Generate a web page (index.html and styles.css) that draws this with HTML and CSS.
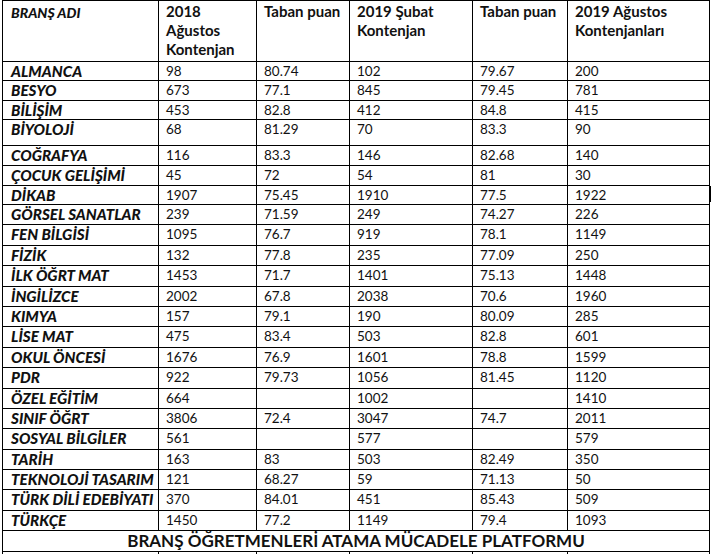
FILE: index.html
```html
<!DOCTYPE html>
<html lang="tr">
<head>
<meta charset="utf-8">
<title>Branş Kontenjanları</title>
<link rel="stylesheet" href="styles.css">
</head>
<body>
<div class="page">
<table class="quota">
  <colgroup>
    <col class="c-name"><col class="c-a"><col class="c-b"><col class="c-c"><col class="c-d"><col class="c-e">
  </colgroup>
  <thead>
    <tr class="head">
      <th class="name">BRANŞ ADI</th>
      <th>2018<br>Ağustos<br>Kontenjan</th>
      <th>Taban puan</th>
      <th>2019 Şubat<br>Kontenjan</th>
      <th>Taban puan</th>
      <th>2019 Ağustos<br>Kontenjanları</th>
    </tr>
  </thead>
  <tbody>
    <tr class="r19"><th class="name">ALMANCA</th><td>98</td><td>80.74</td><td>102</td><td>79.67</td><td>200</td></tr>
    <tr class="r20"><th class="name">BESYO</th><td>673</td><td>77.1</td><td>845</td><td>79.45</td><td>781</td></tr>
    <tr class="r19"><th class="name">BİLİŞİM</th><td>453</td><td>82.8</td><td>412</td><td>84.8</td><td>415</td></tr>
    <tr class="r26"><th class="name">BİYOLOJİ</th><td>68</td><td>81.29</td><td>70</td><td>83.3</td><td>90</td></tr>
    <tr class="r20"><th class="name">COĞRAFYA</th><td>116</td><td>83.3</td><td>146</td><td>82.68</td><td>140</td></tr>
    <tr class="r20"><th class="name">ÇOCUK GELİŞİMİ</th><td>45</td><td>72</td><td>54</td><td>81</td><td>30</td></tr>
    <tr class="r19"><th class="name">DİKAB</th><td>1907</td><td>75.45</td><td>1910</td><td>77.5</td><td>1922</td></tr>
    <tr class="rx"><th class="name">GÖRSEL SANATLAR</th><td>239</td><td>71.59</td><td>249</td><td>74.27</td><td>226</td></tr>
    <tr class="rx"><th class="name">FEN BİLGİSİ</th><td>1095</td><td>76.7</td><td>919</td><td>78.1</td><td>1149</td></tr>
    <tr class="rx"><th class="name">FİZİK</th><td>132</td><td>77.8</td><td>235</td><td>77.09</td><td>250</td></tr>
    <tr class="rx"><th class="name">İLK ÖĞRT MAT</th><td>1453</td><td>71.7</td><td>1401</td><td>75.13</td><td>1448</td></tr>
    <tr class="rx"><th class="name">İNGİLİZCE</th><td>2002</td><td>67.8</td><td>2038</td><td>70.6</td><td>1960</td></tr>
    <tr class="rx"><th class="name">KIMYA</th><td>157</td><td>79.1</td><td>190</td><td>80.09</td><td>285</td></tr>
    <tr class="rx"><th class="name">LİSE MAT</th><td>475</td><td>83.4</td><td>503</td><td>82.8</td><td>601</td></tr>
    <tr class="rx"><th class="name">OKUL ÖNCESİ</th><td>1676</td><td>76.9</td><td>1601</td><td>78.8</td><td>1599</td></tr>
    <tr class="rx"><th class="name">PDR</th><td>922</td><td>79.73</td><td>1056</td><td>81.45</td><td>1120</td></tr>
    <tr class="rx"><th class="name">ÖZEL EĞİTİM</th><td>664</td><td></td><td>1002</td><td></td><td>1410</td></tr>
    <tr class="rx"><th class="name">SINIF ÖĞRT</th><td>3806</td><td>72.4</td><td>3047</td><td>74.7</td><td>2011</td></tr>
    <tr class="rx"><th class="name">SOSYAL BİLGİLER</th><td>561</td><td></td><td>577</td><td></td><td>579</td></tr>
    <tr class="rx"><th class="name">TARİH</th><td>163</td><td>83</td><td>503</td><td>82.49</td><td>350</td></tr>
    <tr class="rx"><th class="name">TEKNOLOJİ TASARIM</th><td>121</td><td>68.27</td><td>59</td><td>71.13</td><td>50</td></tr>
    <tr class="rx"><th class="name">TÜRK DİLİ EDEBİYATI</th><td>370</td><td>84.01</td><td>451</td><td>85.43</td><td>509</td></tr>
    <tr class="r20"><th class="name">TÜRKÇE</th><td>1450</td><td>77.2</td><td>1149</td><td>79.4</td><td>1093</td></tr>
    <tr class="foot"><td colspan="6">BRANŞ ÖĞRETMENLERİ ATAMA MÜCADELE PLATFORMU</td></tr>
    <tr class="stub"><td></td><td></td><td></td><td></td><td></td><td></td></tr>
  </tbody>
</table>
<span class="cursor"></span>
</div>
</body>
</html>
```

FILE: styles.css
```css
html, body {
  margin: 0;
  padding: 0;
  background: #ffffff;
}

.page {
  position: relative;
  width: 714px;
  height: 554px;
  overflow: hidden;
  padding-left: 2px;
  box-sizing: border-box;
}

.quota {
  border-collapse: collapse;
  table-layout: fixed;
  width: 707px;
  font-family: Lato, "Liberation Sans", sans-serif;
  color: #111111;
}

.c-name { width: 156px; }
.c-a { width: 98px; }
.c-b { width: 93px; }
.c-c { width: 123px; }
.c-d { width: 95px; }
.c-e { width: 142px; }

.quota th,
.quota td {
  border: 1px solid #000000;
  padding: 0 0 0 7px;
  vertical-align: top;
  text-align: left;
  white-space: nowrap;
  overflow: hidden;
}

.quota td {
  font-size: 13.5px;
  font-weight: 400;
  line-height: 18px;
  padding-top: 0;
}

.quota .head th {
  height: 61px;
  font-size: 15px;
  font-weight: 700;
  line-height: 19px;
  padding-top: 1px;
  box-sizing: border-box;
}

.quota th.name {
  font-size: 15.2px;
  font-weight: 900;
  font-style: italic;
  line-height: 18px;
  padding-left: 8px;
  padding-top: 0;
}

.quota .head th.name {
  font-size: 14px;
  padding-top: 3px;
}

.r19 { height: 19px; }
.r20 { height: 20px; }
.rx { height: 20.4px; }
.r26 { height: 26px; }

.quota .foot td {
  height: 20px;
  padding: 0;
  text-align: center;
  font-size: 17px;
  font-weight: 700;
  line-height: 19px;
}

.quota .stub td {
  height: 6px;
  padding: 0;
}

.cursor {
  position: absolute;
  left: 709px;
  top: 186px;
  width: 2px;
  height: 16px;
  background: #000000;
}
```
